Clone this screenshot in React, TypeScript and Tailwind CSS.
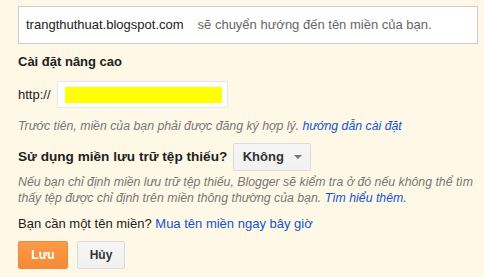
import React from 'react';

const App: React.FC = () => {
  return (
    <div className="w-[484px] h-[277px] bg-[#fff8e6] pl-[18px] pr-[6px] pt-[6px] font-['Liberation_Sans',Arial,sans-serif] text-[13px] text-[#222] overflow-hidden">
      <div className="h-[38px] border border-[#ccc] bg-white flex items-center pl-[7px]">
        <span className="text-[#222]">trangthuthuat.blogspot.com</span>
        <span className="ml-[14px] text-[#666]">sẽ chuyển hướng đến tên miền của bạn.</span>
      </div>

      <h3 className="mt-[10px] font-bold text-[13px] leading-[16px]">Cài đặt nâng cao</h3>

      <div className="mt-[11px] flex items-center">
        <span>http://</span>
        <div className="ml-[6px] w-[171px] h-[27px] bg-white border border-[#e6e6e6] rounded-[2px] flex items-center pl-[7px]">
          <div className="w-[157px] h-[16px] bg-[#ffff00]" />
        </div>
      </div>

      <p className="mt-[10px] italic text-[12.3px] text-[#777] leading-[16px]">
        Trước tiên, miền của bạn phải được đăng ký hợp lý.{' '}
        <a className="text-[#15c] cursor-pointer">hướng dẫn cài đặt</a>
      </p>

      <div className="mt-[9px] flex items-center">
        <span className="font-bold text-[13.6px]">Sử dụng miền lưu trữ tệp thiếu?</span>
        <button className="ml-[6px] w-[78px] h-[28px] bg-gradient-to-b from-[#f5f5f5] to-[#f1f1f1] border border-[#dcdcdc] rounded-[2px] flex items-center justify-center gap-[10px] font-bold text-[#333] text-[13px]">
          Không
          <span className="w-0 h-0 border-l-[4px] border-r-[4px] border-t-[4px] border-l-transparent border-r-transparent border-t-[#777]" />
        </button>
      </div>

      <p className="mt-[3px] italic text-[12.3px] text-[#777] leading-[16px] pr-[4px]">
        Nếu bạn chỉ định miền lưu trữ tệp thiếu, Blogger sẽ kiểm tra ở đó nếu không thể tìm thấy tệp được chỉ định trên miền thông thường của bạn.{' '}
        <a className="text-[#15c] cursor-pointer">Tìm hiểu thêm.</a>
      </p>

      <p className="mt-[10px] leading-[16px]">
        Bạn cần một tên miền? <a className="text-[#15c] cursor-pointer">Mua tên miền ngay bây giờ</a>
      </p>

      <div className="mt-[9px] flex gap-[9px]">
        <button className="w-[50px] h-[28px] rounded-[2px] bg-gradient-to-b from-[#fb9a48] to-[#f58a35] border border-[#ef8a3a] text-white font-bold text-[12px]">
          Lưu
        </button>
        <button className="w-[48px] h-[28px] rounded-[2px] bg-gradient-to-b from-[#f5f5f5] to-[#f1f1f1] border border-[#dcdcdc] text-[#333] font-bold text-[12px]">
          Hủy
        </button>
      </div>
    </div>
  );
};

export default App;
